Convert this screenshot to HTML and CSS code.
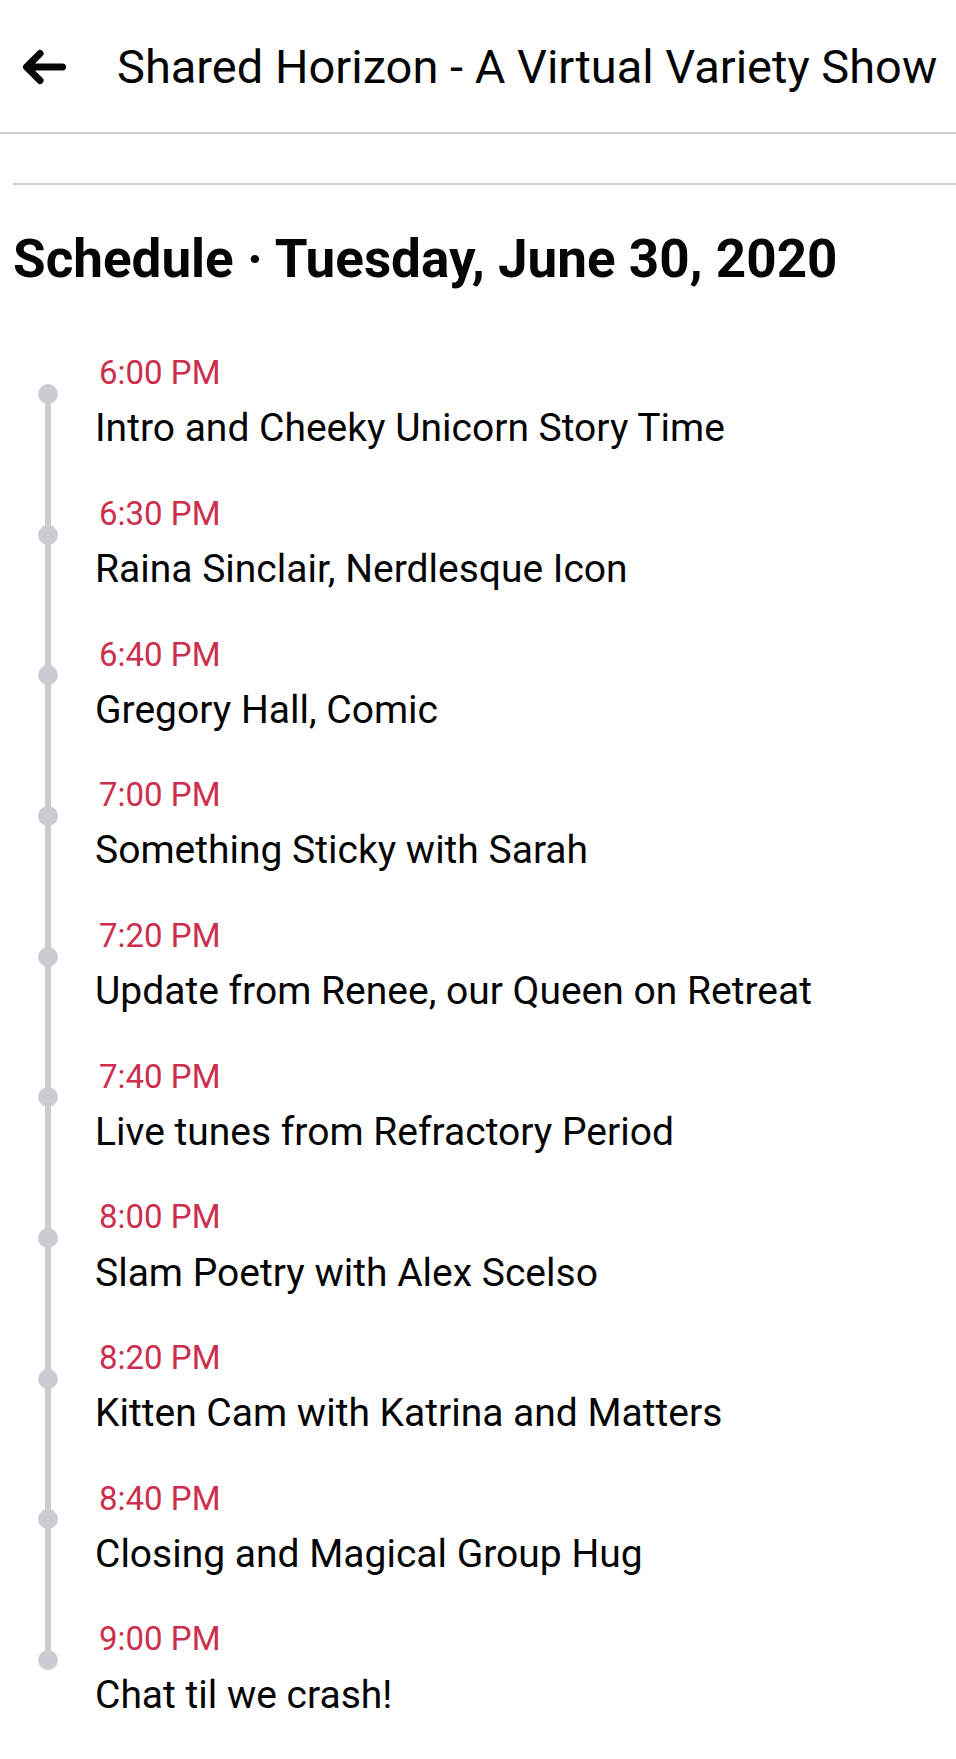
FILE: index.html
```html
<!DOCTYPE html>
<html lang="en">
<head>
<meta charset="utf-8">
<title>Shared Horizon - A Virtual Variety Show</title>
<link rel="stylesheet" href="styles.css">
</head>
<body>
<header class="topbar">
  <svg class="back" viewBox="0 0 44 36" width="44" height="36" aria-hidden="true">
    <path d="M5 18 H40.5 M18 4.5 L4.5 18 L18 31.5" fill="none" stroke="#050505" stroke-width="7" stroke-linecap="round" stroke-linejoin="round"/>
  </svg>
  <h1 class="topbar-title">Shared Horizon - A Virtual Variety Show</h1>
</header>
<main class="content">
  <div class="divider"></div>
  <h2 class="heading">Schedule · Tuesday, June 30, 2020</h2>
  <ol class="timeline">
    <li class="entry"><div class="time">6:00 PM</div><div class="what">Intro and Cheeky Unicorn Story Time</div></li>
    <li class="entry"><div class="time">6:30 PM</div><div class="what">Raina Sinclair, Nerdlesque Icon</div></li>
    <li class="entry"><div class="time">6:40 PM</div><div class="what">Gregory Hall, Comic</div></li>
    <li class="entry"><div class="time">7:00 PM</div><div class="what">Something Sticky with Sarah</div></li>
    <li class="entry"><div class="time">7:20 PM</div><div class="what">Update from Renee, our Queen on Retreat</div></li>
    <li class="entry"><div class="time">7:40 PM</div><div class="what">Live tunes from Refractory Period</div></li>
    <li class="entry"><div class="time">8:00 PM</div><div class="what">Slam Poetry with Alex Scelso</div></li>
    <li class="entry"><div class="time">8:20 PM</div><div class="what">Kitten Cam with Katrina and Matters</div></li>
    <li class="entry"><div class="time">8:40 PM</div><div class="what">Closing and Magical Group Hug</div></li>
    <li class="entry"><div class="time">9:00 PM</div><div class="what">Chat til we crash!</div></li>
  </ol>
</main>
</body>
</html>
```
FILE: styles.css
```css
* { box-sizing: border-box; }
html, body {
  margin: 0;
  padding: 0;
  background: #ffffff;
  font-family: Roboto, "Liberation Sans", Arial, sans-serif;
  color: #050505;
}
.topbar {
  height: 134px;
  border-bottom: 2px solid #cbced2;
  display: flex;
  align-items: center;
  padding-left: 22px;
  padding-top: 1px;
}
.back {
  display: block;
  flex: none;
}
.topbar-title {
  margin: 0 0 0 51px;
  font-size: 47px;
  font-weight: 400;
  line-height: 56px;
  white-space: nowrap;
  color: #050505;
}
.content {
  padding: 49px 0 0 13px;
}
.divider {
  height: 2px;
  background: #cbced2;
}
.heading {
  margin: 43px 0 0 0;
  font-size: 53px;
  font-weight: 700;
  line-height: 62px;
  color: #050505;
  white-space: nowrap;
}
.timeline {
  list-style: none;
  margin: 64.2px 0 0 0;
  padding: 0;
}
.entry {
  position: relative;
  padding: 0 0 43.5px 82px;
}
.entry::before {
  content: "";
  position: absolute;
  left: 32px;
  top: 39.8px;
  width: 6px;
  height: 100%;
  background: #c9ccd1;
}
.entry:last-child::before {
  display: none;
}
.entry::after {
  content: "";
  position: absolute;
  left: 25px;
  top: 29.8px;
  width: 20px;
  height: 20px;
  border-radius: 50%;
  background: #c9ccd1;
}
.time {
  font-size: 33px;
  line-height: 38px;
  color: #cc2f4e;
  margin-left: 4px;
}
.what {
  margin-top: 13.2px;
  font-size: 39px;
  line-height: 46px;
  color: #050505;
}
```
